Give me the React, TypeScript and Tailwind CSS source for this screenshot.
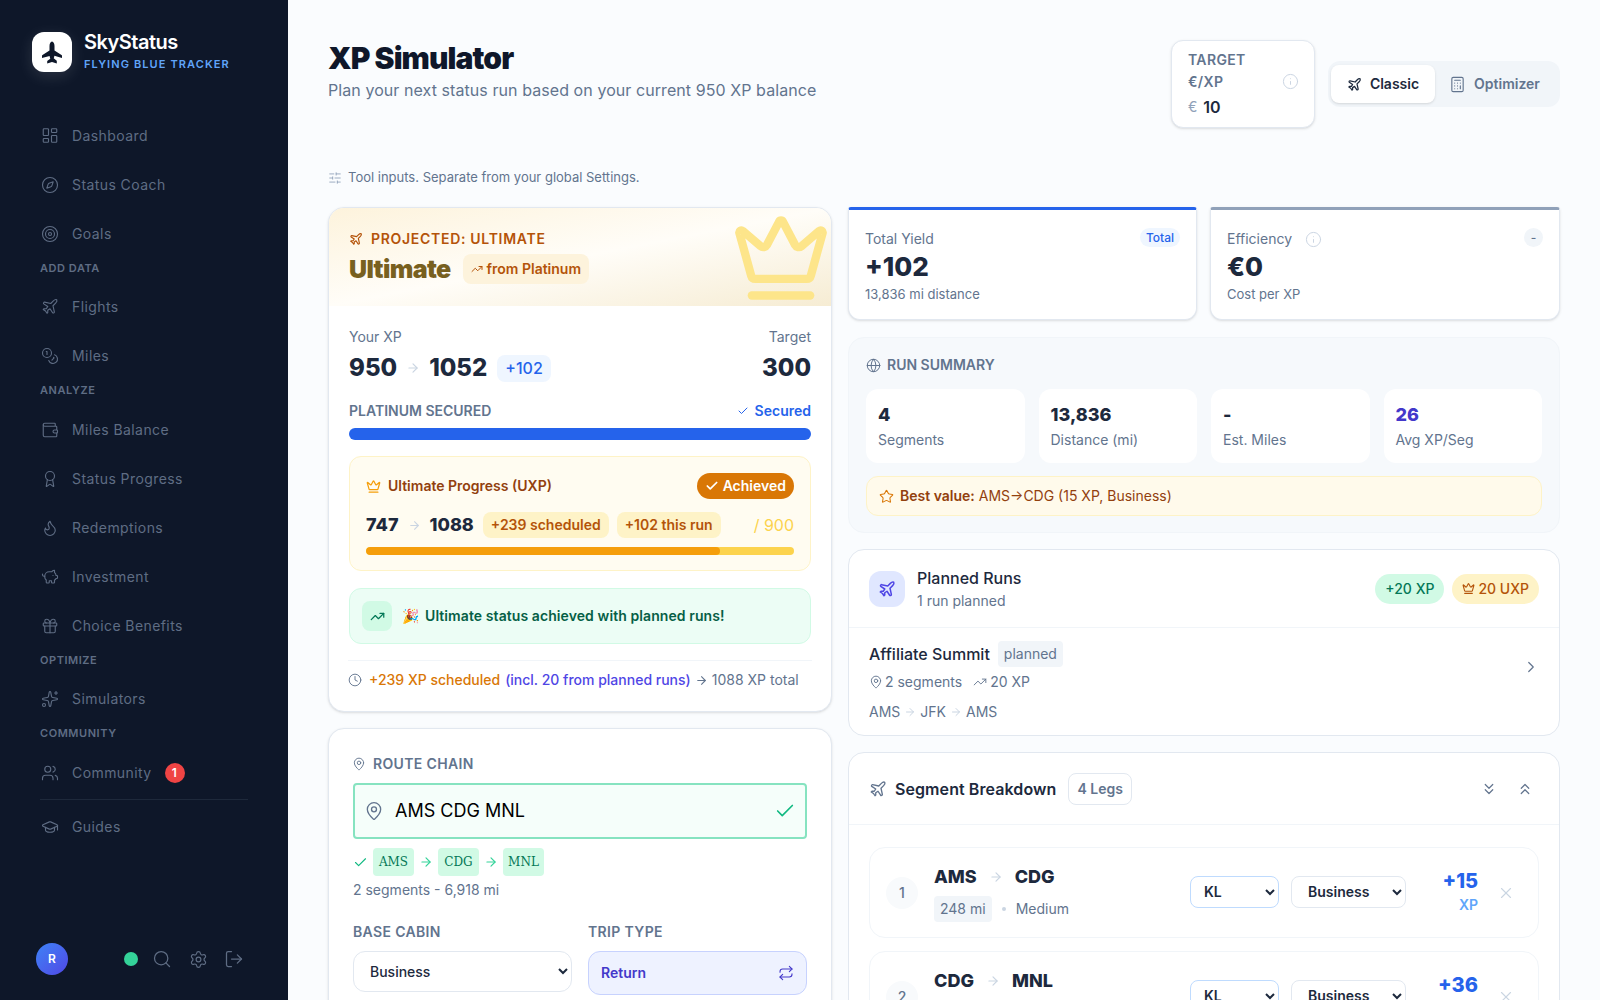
import {
  ArrowRight,
  Award,
  Calculator,
  Check,
  ChevronRight,
  ChevronsDown,
  ChevronsUp,
  Clock,
  Coins,
  Compass,
  Crown,
  Gift,
  Globe,
  GraduationCap,
  Info,
  LayoutDashboard,
  LogOut,
  MapPin,
  PiggyBank,
  Plane,
  Repeat,
  Search,
  Settings,
  SlidersHorizontal,
  Sparkles,
  Star,
  Target,
  TrendingUp,
  Users,
  Wallet,
  Flame,
  X,
} from 'lucide-react';
import type { ReactNode } from 'react';

function NavItem({ icon, label, badge }: { icon: ReactNode; label: string; badge?: string }) {
  return (
    <div className="flex h-[49px] items-center gap-[13px] pl-[41px] text-sm tracking-[0.03em] text-[#5f6d84]">
      <span className="flex w-[18px] justify-center">{icon}</span>
      <span>{label}</span>
      {badge && (
        <span className="flex h-5 w-5 items-center justify-center rounded-full bg-[#ef4444] text-xs font-semibold text-white">
          {badge}
        </span>
      )}
    </div>
  );
}

function NavHeading({ children, extra }: { children: string; extra?: boolean }) {
  return (
    <div className={`flex items-center pb-[4px] pl-10 text-[11px] font-semibold tracking-[0.05em] text-[#5f6d84] ${extra ? 'h-[25px]' : 'h-6'}`}>
      {children}
    </div>
  );
}

function Sidebar() {
  return (
    <aside className="flex h-full w-[288px] shrink-0 flex-col bg-[#0e1729]">
      <div className="flex h-[111px] items-start gap-3 pl-8 pt-8">
        <div className="flex h-10 w-10 items-center justify-center rounded-xl bg-white text-[#0e1729] shadow-[0_4px_16px_rgba(255,255,255,0.12)]">
          <svg width="24" height="25" viewBox="0 0 24 24" fill="currentColor">
            <path d="M12 1c1.5 0 2.5 2.2 2.5 4.5V10l7 4.5c.3.2.5.5.5.9v2.1l-7.6-2.3c-.2 1-.4 1.9-.7 2.6l2.8 2.1c.2.2.3.4.3.6V23l-4.8-1.5L7.2 23v-2.1c0-.2.1-.4.3-.6l2.8-2.1c-.3-.7-.5-1.6-.7-2.6L2 17.5v-2.1c0-.4.2-.7.5-.9l7-4.5V5.5C9.5 3.2 10.5 1 12 1z" />
          </svg>
        </div>
        <div>
          <div className="text-xl leading-[20px] font-semibold tracking-tight text-white">SkyStatus</div>
          <div className="mt-[4px] text-[11px] leading-4 font-semibold tracking-[0.1em] text-[#60a5fa]">
            FLYING BLUE TRACKER
          </div>
        </div>
      </div>
      <NavItem icon={<LayoutDashboard size={23} strokeWidth={1.5} />} label="Dashboard" />
      <NavItem icon={<Compass size={22} strokeWidth={1.5} />} label="Status Coach" />
      <NavItem icon={<Target size={22} strokeWidth={1.5} />} label="Goals" />
      <NavHeading>ADD DATA</NavHeading>
      <NavItem icon={<Plane size={21} strokeWidth={1.5} />} label="Flights" />
      <NavItem icon={<Coins size={22} strokeWidth={1.5} />} label="Miles" />
      <NavHeading extra>ANALYZE</NavHeading>
      <NavItem icon={<Wallet size={22} strokeWidth={1.5} />} label="Miles Balance" />
      <NavItem icon={<Award size={22} strokeWidth={1.5} />} label="Status Progress" />
      <NavItem icon={<Flame size={22} strokeWidth={1.5} />} label="Redemptions" />
      <NavItem icon={<PiggyBank size={22} strokeWidth={1.5} />} label="Investment" />
      <NavItem icon={<Gift size={22} strokeWidth={1.5} />} label="Choice Benefits" />
      <NavHeading>OPTIMIZE</NavHeading>
      <NavItem icon={<Sparkles size={22} strokeWidth={1.5} />} label="Simulators" />
      <NavHeading extra>COMMUNITY</NavHeading>
      <NavItem icon={<Users size={22} strokeWidth={1.5} />} label="Community" badge="1" />
      <div className="mx-10 mt-[2px] mb-[2px] h-px bg-[#1e293b]" />
      <NavItem icon={<GraduationCap size={22} strokeWidth={1.5} />} label="Guides" />
      <div className="mt-auto flex items-center pb-[25px] pl-9 text-[#5f6d84]">
        <div className="flex h-8 w-8 items-center justify-center rounded-full bg-gradient-to-br from-[#3b82f6] to-[#4f46e5] text-xs font-semibold text-white">
          R
        </div>
        <span className="ml-[56px] h-3.5 w-3.5 rounded-full bg-[#34d399]" />
        <Search size={20} strokeWidth={1.5} className="ml-[14px]" />
        <Settings size={19} strokeWidth={1.5} className="ml-[17px]" />
        <LogOut size={20} strokeWidth={1.5} className="ml-[16px]" />
      </div>
    </aside>
  );
}

function PageHeader() {
  return (
    <div className="flex items-start justify-between">
      <div>
        <h1 className="text-[30px] leading-9 font-black tracking-[-0.03em] text-[#0f172a]">XP Simulator</h1>
        <p className="mt-[2px] text-base leading-6 tracking-[0.0045em] text-slate-500">
          Plan your next status run based on your current 950 XP balance
        </p>
      </div>
      <div className="flex items-start gap-[13px]">
        <div className="flex h-[88px] w-[144px] items-center justify-between rounded-xl border border-slate-200 bg-white pr-[15px] pl-4 shadow-sm">
          <div>
            <div className="text-sm leading-[22px] font-semibold tracking-[0.025em] text-slate-500">
              TARGET
              <br />
              €/XP
            </div>
            <div className="mt-[2px] flex items-center gap-[6px] text-base leading-6 font-semibold text-slate-800">
              <span className="text-sm font-normal text-slate-400">€</span>10
            </div>
          </div>
          <Info size={17} strokeWidth={1.4} className="mb-[6px] text-slate-300" />
        </div>
        <div className="mt-[21px] flex h-[46px] w-[232px] items-center rounded-xl bg-slate-100 p-[3px]">
          <div className="flex h-[38px] w-[104px] items-center justify-center gap-2 rounded-lg bg-white text-sm font-semibold text-slate-800 shadow-sm">
            <Plane size={15} />
            Classic
          </div>
          <div className="flex flex-1 items-center justify-center gap-2 pr-[3px] text-sm font-semibold text-slate-500">
            <Calculator size={17} strokeWidth={1.6} />
            Optimizer
          </div>
        </div>
      </div>
    </div>
  );
}

function ProjectionCard() {
  return (
    <section className="overflow-hidden rounded-2xl border border-slate-200 bg-white shadow-sm">
      <div className="relative h-[98px] overflow-hidden bg-gradient-to-br from-[#fdf3dc] via-[#fffdf8] to-[#f6ecd3] pt-[21px] pl-5">
        <Crown size={100} className="absolute top-0 right-0 text-[#fde58a]" />
        <div className="flex items-center gap-2 text-sm leading-5 font-semibold tracking-[0.05em] text-[#b45309]">
          <Plane size={14} />
          PROJECTED: ULTIMATE
        </div>
        <div className="mt-[4px] flex items-center gap-3">
          <span className="text-[25px] leading-8 font-black tracking-tight text-[#78601f]">Ultimate</span>
          <span className="flex h-[30px] items-center gap-1 rounded-lg bg-[#fdf3dc] px-2 text-sm font-semibold text-[#b45309]">
            <TrendingUp size={12} />
            from Platinum
          </span>
        </div>
      </div>

      <div className="px-5 pt-[21px] pb-[21px]">
        <div className="flex items-start justify-between">
          <div>
            <div className="text-sm leading-5 text-slate-500">Your XP</div>
            <div className="mt-[5px] flex h-8 items-center text-2xl font-extrabold text-slate-800">
              950
              <ArrowRight size={14} className="mx-[9px] text-slate-300" />
              1052
              <span className="ml-[10px] flex h-[27px] items-center rounded-lg bg-[#eff6ff] px-2 text-base font-medium text-[#2563eb]">
                +102
              </span>
            </div>
          </div>
          <div className="text-right">
            <div className="text-sm leading-5 text-slate-500">Target</div>
            <div className="mt-[5px] flex h-8 items-center text-2xl font-extrabold text-slate-800">300</div>
          </div>
        </div>

        <div className="mt-[17px] flex items-center justify-between text-sm leading-5 font-semibold">
          <span className="text-slate-500">PLATINUM SECURED</span>
          <span className="flex items-center gap-[6px] text-[#2563eb]">
            <Check size={12} />
            Secured
          </span>
        </div>
        <div className="mt-[7px] h-3 rounded-full bg-[#2563eb]" />

        <div className="mt-4 h-[115px] rounded-xl border border-[#fef3c7] bg-[#fffcf1] px-4 pt-4">
          <div className="flex h-[26px] items-center justify-between">
            <span className="flex items-center gap-[7px] text-sm font-semibold text-[#92400e]">
              <Crown size={15} className="text-[#f59e0b]" />
              Ultimate Progress (UXP)
            </span>
            <span className="flex h-[26px] items-center gap-1 rounded-full bg-[#d97706] px-2 text-sm font-semibold text-white">
              <Check size={14} strokeWidth={3} />
              Achieved
            </span>
          </div>
          <div className="mt-[13px] flex h-[26px] items-center">
            <span className="text-lg font-extrabold text-slate-800">747</span>
            <ArrowRight size={13} className="mx-[9px] text-slate-300" />
            <span className="text-lg font-extrabold text-slate-800">1088</span>
            <span className="ml-[9px] flex h-[26px] items-center rounded-lg bg-[#fef3c7] px-2 text-sm font-semibold text-[#b45309]">
              +239 scheduled
            </span>
            <span className="ml-2 flex h-[26px] items-center rounded-lg bg-[#fef3c7] px-2 text-sm font-semibold text-[#b45309]">
              +102 this run
            </span>
            <span className="ml-auto text-base text-[#fcd34d]">/ 900</span>
          </div>
          <div className="mt-[9px] flex h-2 gap-px overflow-hidden rounded-full bg-[#fcd34d]">
            <div className="w-[354px] rounded-full bg-[#f59e0b]" />
          </div>
        </div>

        <div className="mt-[17px] flex h-[56px] items-center rounded-xl border border-[#d1fae5] bg-[#ecfdf5] pl-[12px]">
          <span className="flex h-[30px] w-[30px] items-center justify-center rounded-lg bg-[#d1fae5] text-[#047857]">
            <TrendingUp size={15} />
          </span>
          <span className="ml-[10px] text-sm">🎉</span>
          <span className="ml-[6px] text-sm font-semibold tracking-[0.006em] text-[#065f46]">Ultimate status achieved with planned runs!</span>
        </div>

        <div className="mt-4 -mx-[1px] flex items-center border-t border-slate-100 pt-[9px] text-sm leading-5 text-slate-500">
          <Clock size={14} strokeWidth={1.6} className="mr-[7px] text-slate-500" />
          <span className="font-medium text-[#d97706]">+239 XP scheduled</span>
          <span className="ml-[5px] font-medium text-[#4f46e5]">(incl. 20 from planned runs)</span>
          <ArrowRight size={13} className="mx-[4px]" />
          1088 XP total
        </div>
      </div>
    </section>
  );
}

function RouteCode({ code }: { code: string }) {
  return (
    <span className="flex h-7 w-[41px] items-center justify-center rounded bg-[#d1fae5] font-['DejaVu_Serif',serif] text-xs text-[#047857]">
      {code}
    </span>
  );
}

function RouteCard() {
  return (
    <section className="rounded-2xl border border-slate-200 bg-white px-6 pt-[25px] pb-6 shadow-sm">
      <div className="flex items-center gap-[7px] text-sm leading-5 font-semibold tracking-[0.025em] text-slate-500">
        <MapPin size={14} strokeWidth={1.6} className="-ml-[1px]" />
        ROUTE CHAIN
      </div>
      <div className="mt-[9px] flex h-[56px] items-center rounded border-2 border-[#86e3c0] bg-[#f5fefa] pr-[9px] pl-[9px]">
        <MapPin size={20} strokeWidth={1.6} className="text-slate-500" />
        <span className="ml-[11px] text-lg text-black">AMS CDG MNL</span>
        <Check size={22} strokeWidth={1.8} className="ml-auto text-[#10b981]" />
      </div>
      <div className="mt-[9px] flex items-center text-[#34d399]">
        <Check size={15} strokeWidth={1.8} className="mr-[5px] text-[#10b981]" />
        <RouteCode code="AMS" />
        <ArrowRight size={14} className="mx-[5px]" />
        <RouteCode code="CDG" />
        <ArrowRight size={14} className="mx-[5px]" />
        <RouteCode code="MNL" />
      </div>
      <div className="mt-[4px] text-sm leading-5 text-slate-500">2 segments - 6,918 mi</div>
      <div className="mt-[22px] grid grid-cols-2 gap-4">
        <div>
          <div className="text-sm leading-5 font-semibold tracking-[0.025em] text-slate-500">BASE CABIN</div>
          <select className="mt-[9px] h-[41px] w-full rounded-xl border border-slate-200 bg-white pl-3 text-sm font-medium text-slate-800">
            <option>Business</option>
          </select>
        </div>
        <div>
          <div className="text-sm leading-5 font-semibold tracking-[0.025em] text-slate-500">TRIP TYPE</div>
          <div className="mt-[9px] flex h-[44px] items-center justify-between rounded-xl border border-[#c7d2fe] bg-[#eef2ff] px-3 text-sm font-semibold text-[#4338ca]">
            Return
            <Repeat size={16} strokeWidth={1.6} />
          </div>
        </div>
      </div>
    </section>
  );
}

function StatCard({ bar, children }: { bar: string; children: ReactNode }) {
  return (
    <div className={`relative h-[113px] rounded-t-[3px] rounded-b-xl border border-slate-200 border-t-[3px] bg-white px-4 pt-[19px] shadow-sm ${bar}`}>
      {children}
    </div>
  );
}

function SummaryTile({ value, label, accent }: { value: string; label: string; accent?: boolean }) {
  return (
    <div className="h-[74px] rounded-xl bg-white pt-[14px] pl-3">
      <div className={`text-lg leading-6 font-extrabold ${accent ? 'text-[#4338ca]' : 'text-slate-800'}`}>{value}</div>
      <div className="mt-[3px] text-sm leading-5 text-slate-500">{label}</div>
    </div>
  );
}

function StatsPanel() {
  return (
    <>
      <div className="grid grid-cols-[349px_350px] gap-[13px]">
        <StatCard bar="border-t-[#2563eb]">
          <span className="absolute top-[18px] right-4 flex h-[19px] items-center rounded-full bg-[#eff6ff] px-[6px] text-xs font-medium text-[#2563eb]">
            Total
          </span>
          <div className="text-sm leading-5 text-slate-500">Total Yield</div>
          <div className="mt-[1px] text-[26px] leading-[34px] font-extrabold text-slate-800">+102</div>
          <div className="text-[13px] leading-5 text-slate-500">13,836 mi distance</div>
        </StatCard>
        <StatCard bar="border-t-slate-400">
          <span className="absolute top-[18px] right-4 flex h-[19px] w-[19px] items-center justify-center rounded-full bg-slate-100 text-xs font-medium text-slate-500">
            -
          </span>
          <div className="flex items-center gap-[13px] text-sm leading-5 text-slate-500">
            Efficiency
            <Info size={17} strokeWidth={1.4} className="text-slate-300" />
          </div>
          <div className="mt-[1px] text-[26px] leading-[34px] font-extrabold text-slate-800">€0</div>
          <div className="text-[13px] leading-5 text-slate-500">Cost per XP</div>
        </StatCard>
      </div>

      <section className="mt-[17px] h-[196px] rounded-2xl border border-slate-100 bg-[#f6f9fc] px-[17px] pt-[17px]">
        <div className="flex items-center gap-[6px] text-sm leading-5 font-semibold text-slate-500">
          <Globe size={15} strokeWidth={1.6} />
          RUN SUMMARY
        </div>
        <div className="mt-[14px] grid grid-cols-4 gap-3.5">
          <SummaryTile value="4" label="Segments" />
          <SummaryTile value="13,836" label="Distance (mi)" />
          <SummaryTile value="-" label="Est. Miles" />
          <SummaryTile value="26" label="Avg XP/Seg" accent />
        </div>
        <div className="mt-[13px] flex h-10 items-center gap-[6px] rounded-xl border border-[#fef3c7] bg-[#fffaeb] pl-[12px] text-sm text-[#92400e]">
          <Star size={15} strokeWidth={1.7} className="text-[#d97706]" />
          <span>
            <span className="font-semibold">Best value:</span> AMS→CDG (15 XP, Business)
          </span>
        </div>
      </section>
    </>
  );
}

function PlannedRuns() {
  return (
    <section className="mt-4 h-[187px] rounded-2xl border border-slate-200 bg-white">
      <div className="flex h-[78px] items-center justify-between border-b border-slate-100 pr-5 pl-5">
        <div className="flex items-center gap-3">
          <span className="flex h-9 w-9 items-center justify-center rounded-xl bg-[#e0e7ff] text-[#4f46e5]">
            <Plane size={18} />
          </span>
          <div>
            <div className="text-base leading-6 font-medium text-slate-800">Planned Runs</div>
            <div className="mt-[1px] text-sm leading-5 text-slate-500">1 run planned</div>
          </div>
        </div>
        <div className="flex items-center gap-2">
          <span className="flex h-[30px] items-center rounded-full bg-[#d1fae5] px-[10px] text-sm font-medium text-[#047857]">+20 XP</span>
          <span className="flex h-[30px] items-center gap-[3px] rounded-full bg-[#fef3c7] px-[10px] text-sm font-medium text-[#b45309]">
            <Crown size={13} />
            20 UXP
          </span>
        </div>
      </div>
      <div className="flex items-start justify-between pt-[13px] pr-[19px] pl-5">
        <div>
          <div className="flex items-center gap-2">
            <span className="text-base font-medium text-slate-800">Affiliate Summit</span>
            <span className="flex h-[26px] items-center rounded bg-slate-100 px-[6px] text-sm text-slate-500">planned</span>
          </div>
          <div className="mt-[5px] flex items-center text-sm leading-5 text-slate-500">
            <MapPin size={14} strokeWidth={1.6} className="mr-[2px]" />
            2 segments
            <TrendingUp size={14} strokeWidth={1.6} className="mr-[3px] ml-[11px]" />
            20 XP
          </div>
          <div className="mt-[10px] flex items-center text-sm leading-5 text-slate-500">
            AMS
            <ArrowRight size={12} className="mx-[4px] text-slate-300" />
            JFK
            <ArrowRight size={12} className="mx-[4px] text-slate-300" />
            AMS
          </div>
        </div>
        <ChevronRight size={18} strokeWidth={1.6} className="mt-[17px] text-slate-500" />
      </div>
    </section>
  );
}

function SegmentRow({ n, from, to, xp, mi, band }: { n: number; from: string; to: string; xp: string; mi: string; band: string }) {
  return (
    <div className="flex h-[91px] shrink-0 items-center rounded-2xl border border-slate-100 bg-white pr-[23px] pl-4">
      <span className="flex h-8 w-8 shrink-0 items-center justify-center rounded-full bg-slate-50 text-sm font-medium text-slate-500">{n}</span>
      <div className="ml-4 flex-1 pt-[2px]">
        <div className="flex items-center text-lg leading-6 font-extrabold text-slate-800">
          {from}
          <ArrowRight size={14} className="mx-[12px] text-slate-300" />
          {to}
        </div>
        <div className="mt-[7px] flex items-center text-sm text-slate-500">
          <span className="flex h-[26px] items-center rounded bg-slate-100 px-[6px]">{mi}</span>
          <span className="mx-[10px] h-1 w-1 rounded-full bg-slate-300" />
          {band}
        </div>
      </div>
      <select className="-mt-[2px] h-8 w-[89px] rounded-lg border border-[#bfdbfe] bg-white pl-[9px] text-sm font-semibold text-slate-800">
        <option>KL</option>
      </select>
      <select className="-mt-[2px] ml-3 h-8 w-[115px] rounded-lg border border-slate-200 bg-white pl-3 text-sm font-semibold text-slate-800">
        <option>Business</option>
      </select>
      <div className="-mt-[3px] w-[72px] text-right">
        <div className="text-xl leading-7 font-extrabold text-[#2563eb]">{xp}</div>
        <div className="text-sm leading-5 font-semibold text-[#60a5fa]">XP</div>
      </div>
      <X size={18} strokeWidth={1.5} className="ml-[19px] text-slate-300" />
    </div>
  );
}

function SegmentBreakdown() {
  return (
    <section className="mt-[16px] rounded-2xl border border-slate-200 bg-white">
      <div className="flex h-[72px] items-center border-b border-slate-100 pr-[25px] pl-5">
        <Plane size={18} strokeWidth={1.8} className="text-slate-500" />
        <span className="ml-2 text-base font-semibold tracking-[0.005em] text-slate-800">Segment Breakdown</span>
        <span className="ml-3 flex h-8 items-center rounded-lg border border-slate-200 px-2 text-sm font-semibold text-slate-500">4 Legs</span>
        <ChevronsDown size={18} strokeWidth={1.6} className="ml-auto text-slate-500" />
        <ChevronsUp size={18} strokeWidth={1.6} className="ml-[18px] text-slate-500" />
      </div>
      <div className="flex flex-col gap-[13px] px-5 pt-[22px]">
        <SegmentRow n={1} from="AMS" to="CDG" xp="+15" mi="248 mi" band="Medium" />
        <SegmentRow n={2} from="CDG" to="MNL" xp="+36" mi="6,670 mi" band="Long" />
      </div>
    </section>
  );
}

export default function App() {
  return (
    <div className="flex h-screen overflow-hidden bg-[#fafcfe] font-['Inter',sans-serif]">
      <Sidebar />
      <main className="h-full flex-1 overflow-hidden px-10 pt-10">
        <PageHeader />
        <div className="mt-[40px] flex h-5 items-center gap-[6px] text-[13px] text-slate-500">
          <SlidersHorizontal size={14} strokeWidth={1.5} className="text-slate-400" />
          Tool inputs. Separate from your global Settings.
        </div>
        <div className="mt-[19px] grid grid-cols-[504px_1fr] items-start gap-4">
          <div className="flex flex-col gap-4">
            <ProjectionCard />
            <RouteCard />
          </div>
          <div>
            <StatsPanel />
            <PlannedRuns />
            <SegmentBreakdown />
          </div>
        </div>
      </main>
    </div>
  );
}
